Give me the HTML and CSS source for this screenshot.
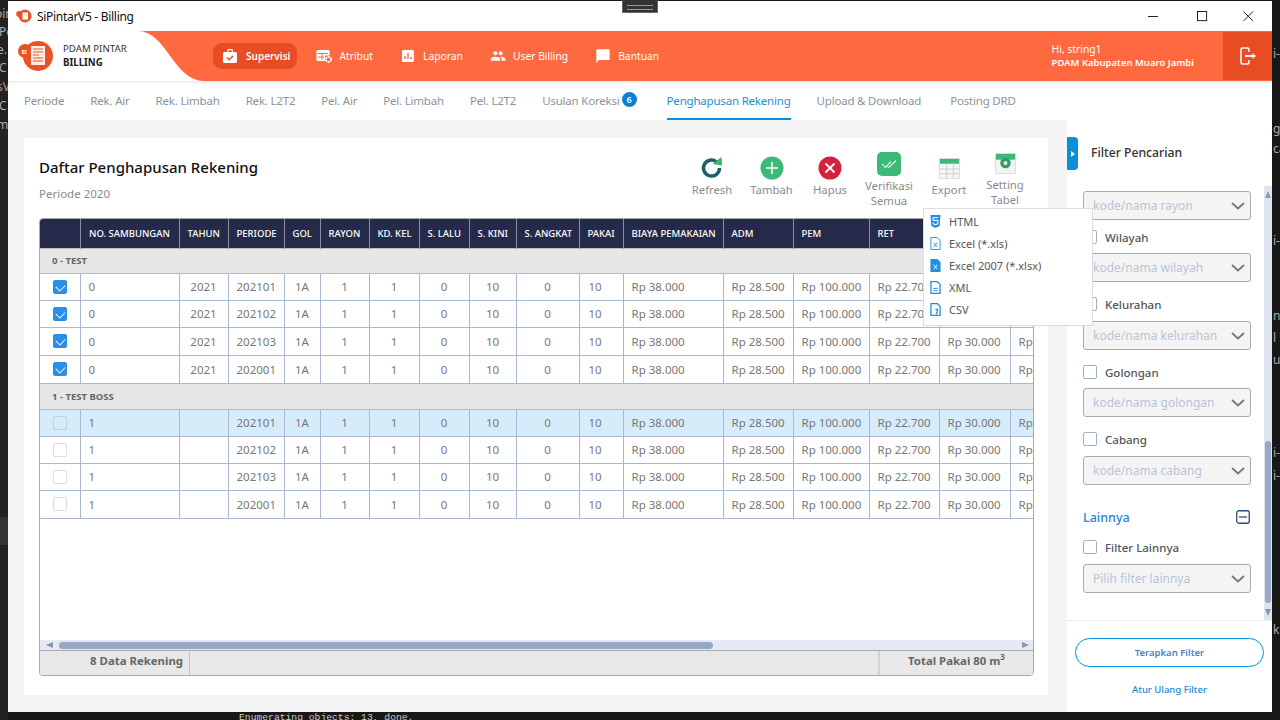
FILE: index.html
```html
<!DOCTYPE html>
<html lang="en">
<head>
  <meta charset="UTF-8" />
  <title>SiPintarV5 - Billing</title>
  <link rel="stylesheet" href="styles.css">
</head>
<body>
  <!-- terminal and editor behind the app window -->
  <div class="side-strip"></div>
  <span class="term tl1">oin</span><span class="term tl2">Pe</span><span class="term tl3">e.</span><span class="term tl4">C</span><span class="term tl5 term-gold">sV</span><span class="term tl6">C</span><span class="term tl7">mi</span>
  <span class="term tr1">i-</span><span class="term tr2">ga</span><span class="term tr3">ca</span><span class="term tr4">i-</span><span class="term tr5">n</span><span class="term tr6">l I</span><span class="term tr7">ut</span><span class="term tr8">i-</span><span class="term tr9">i-</span><span class="term tr10">k</span>
  <span class="term-line">Enumerating objects: 13, done.</span>
  <div class="drag-handle"></div>

  <div class="window">
    <div class="titlebar">
      <svg class="title-logo" viewBox="0 0 16 14"><circle cx="9" cy="7" r="6.5" fill="#ea5126"/><circle cx="3.2" cy="5" r="3" fill="#ea5126"/><rect x="6.5" y="3.5" width="5.5" height="7" fill="#fff"/></svg>
      <span class="title-text">SiPintarV5 - Billing</span>
      <div class="win-controls">
        <svg class="win-min" viewBox="0 0 12 12"><path d="M0 6h11" stroke="#111" fill="none"/></svg>
        <svg viewBox="0 0 12 12"><rect x=".5" y=".5" width="10" height="10" stroke="#111" fill="none"/></svg>
        <svg viewBox="0 0 12 12"><path d="M.5.5l10.500 10.500M11 .5L.5 11" stroke="#111" fill="none"/></svg>
      </div>
    </div>

    <header class="topbar">
      <div class="brand">
        <svg class="brand-logo" viewBox="0 0 36 30"><circle cx="20" cy="15" r="15" fill="#ea5126"/><circle cx="7" cy="10" r="7" fill="#ea5126"/><path d="M13 5h14v19H13z" fill="#fff" opacity=".9"/><path d="M15 8h10M15 11h10M15 14h6M15 17h10M15 20h10" stroke="#ea5126"/><text x="3.500" y="12.500" class="logo-mini">BI</text></svg>
        <div class="brand-text">
          <div>PDAM PINTAR</div>
          <div class="brand-sub">BILLING</div>
        </div>
      </div>
      <svg class="brand-curve" viewBox="0 0 66 50"><path d="M0 0C28 0 36 50 66 50H0z" fill="#fff"/></svg>
      <nav class="nav">
        <a class="nav-item active"><svg viewBox="0 0 16 16"><path d="M5 4V2.500C5 1.700 5.700 1 6.500 1h3c.8 0 1.500.7 1.500 1.500V4h2.500c.8 0 1.500.7 1.500 1.500v8c0 .8-.7 1.500-1.500 1.500h-11C1.700 15 1 14.300 1 13.500v-8C1 4.700 1.700 4 2.500 4zm1.300 0h3.400V2.300H6.300z" fill="#fff"/><path d="M5 9.500l2.200 2.200L11 8" stroke="#e84c22" stroke-width="1.500" fill="none"/></svg>Supervisi</a>
        <a class="nav-item"><svg viewBox="0 0 16 16"><path d="M1.500 2h11c.5 0 1 .5 1 1v4.500H9V13H1.500c-.5 0-1-.5-1-1V3c0-.5.5-1 1-1z" fill="#fff"/><path d="M2 5.500h10M2 9h6M6 5.500V12" stroke="#ff6940"/><circle cx="12.500" cy="11.500" r="2.600" fill="none" stroke="#fff" stroke-width="1.800" stroke-dasharray="2 .8"/></svg>Atribut</a>
        <a class="nav-item"><svg viewBox="0 0 16 16"><rect x="2" y="2" width="12" height="12" rx="1.500" fill="#fff"/><path d="M5 11V8M8 11V5M11 11V9" stroke="#ff6940" stroke-width="1.400"/></svg>Laporan</a>
        <a class="nav-item"><svg viewBox="0 0 24 24"><path d="M16 11c1.660 0 2.990-1.340 2.990-3S17.660 5 16 5c-1.660 0-3 1.340-3 3s1.340 3 3 3zm-8 0c1.660 0 2.990-1.340 2.990-3S9.660 5 8 5C6.340 5 5 6.340 5 8s1.340 3 3 3zm0 2c-2.330 0-7 1.170-7 3.500V19h14v-2.500c0-2.330-4.670-3.500-7-3.500zm8 0c-.29 0-.62.02-.97.05 1.160.84 1.970 1.970 1.970 3.450V19h6v-2.500c0-2.330-4.670-3.500-7-3.500z" fill="#fff"/></svg>User Billing</a>
        <a class="nav-item"><svg viewBox="0 0 24 24"><path d="M20 2H4c-1.100 0-2 .9-2 2v18l4-4h14c1.100 0 2-.9 2-2V4c0-1.100-.9-2-2-2z" fill="#fff"/></svg>Bantuan</a>
      </nav>
      <div class="user-box">
        <div>Hi, string1</div>
        <div class="user-org">PDAM Kabupaten Muaro Jambi</div>
      </div>
      <button class="logout"><svg viewBox="0 0 18 18"><path d="M10 5V2.500C10 1.700 9.500 1 8.500 1h-5C2.500 1 2 1.700 2 2.500v13c0 .8.5 1.500 1.500 1.500h5c1 0 1.500-.7 1.500-1.500V13" fill="none" stroke="#fff" stroke-width="1.500"/><path d="M6 9h9" stroke="#fff" stroke-width="2"/><path d="M13.500 6l3.500 3-3.500 3z" fill="#fff"/></svg></button>
    </header>

    <div class="tabs">
      <a class="tab">Periode</a>
      <a class="tab">Rek. Air</a>
      <a class="tab">Rek. Limbah</a>
      <a class="tab">Rek. L2T2</a>
      <a class="tab">Pel. Air</a>
      <a class="tab">Pel. Limbah</a>
      <a class="tab">Pel. L2T2</a>
      <a class="tab">Usulan Koreksi <span class="badge">6</span></a>
      <a class="tab active">Penghapusan Rekening</a>
      <a class="tab">Upload &amp; Download</a>
      <a class="tab">Posting DRD</a>
    </div>

    <div class="content">
      <main class="main">
        <section class="card">
          <div class="card-head">
            <div>
              <h1>Daftar Penghapusan Rekening</h1>
              <p class="period">Periode 2020</p>
            </div>
            <div class="toolbar">
              <div class="tool tool-refresh">
                <svg viewBox="0 0 24 24"><path d="M19.500 12a8 8 0 1 1-3-6.200" fill="none" stroke="#1f5f6b" stroke-width="3.500"/><path d="M12.500 8L22 9.500 21.500 1z" fill="#35b56a"/></svg>
                <span>Refresh</span>
              </div>
              <div class="tool tool-add">
                <svg viewBox="0 0 24 24"><circle cx="12" cy="12" r="11.500" fill="#3cb878"/><path d="M12 6v12M6 12h12" stroke="#fff" stroke-width="1.500"/></svg>
                <span>Tambah</span>
              </div>
              <div class="tool tool-del">
                <svg viewBox="0 0 24 24"><circle cx="12" cy="12" r="11.500" fill="#d4213d"/><path d="M7.500 7.500l9 9M16.500 7.500l-9 9" stroke="#fff" stroke-width="1.800"/></svg>
                <span>Hapus</span>
              </div>
              <div class="tool tool-verify">
                <svg viewBox="0 0 24 24"><rect width="24" height="24" rx="5" fill="#3cb878"/><path d="M5 12l3.500 3.500L14 9.500M10.500 14.500l1.500 1L19 8.500" fill="none" stroke="#d8f2e2" stroke-width="1.200"/></svg>
                <span>Verifikasi<br>Semua</span>
              </div>
              <div class="tool tool-export">
                <svg viewBox="0 0 22 22"><rect x=".5" y=".5" width="21" height="21" fill="#f6f6f6" stroke="#ddd"/><rect x="1" y="1" width="20" height="5" fill="#3cb878"/><path d="M1 11.500h20M1 16.500h20M8 6v15M15 6v15" stroke="#ccc"/></svg>
                <span>Export</span>
              </div>
              <div class="tool tool-setting">
                <svg viewBox="0 0 22 22"><rect x=".5" y=".5" width="21" height="21" fill="#f3f3f3" stroke="#ddd"/><rect x="1" y="1" width="20" height="6" fill="#3cb878"/><circle cx="11" cy="10.500" r="5.500" fill="#2f9e63"/><circle cx="11" cy="10.500" r="2" fill="#f3f3f3"/></svg>
                <span>Setting<br>Tabel</span>
              </div>
            </div>
          </div>

          <div class="grid-box">
            <div class="grid-scroll">
              <table class="grid">
                <colgroup>
                  <col class="c40"><col class="c99"><col class="c49"><col class="c56"><col class="c36"><col class="c49"><col class="c50"><col class="c50"><col class="c47"><col class="c63"><col class="c44"><col class="c100"><col class="c70"><col class="c76"><col class="c70"><col class="c71"><col class="c100">
                </colgroup>
                <thead>
                  <tr><th></th><th>NO. SAMBUNGAN</th><th>TAHUN</th><th>PERIODE</th><th>GOL</th><th>RAYON</th><th>KD. KEL</th><th>S. LALU</th><th>S. KINI</th><th>S. ANGKAT</th><th>PAKAI</th><th>BIAYA PEMAKAIAN</th><th>ADM</th><th>PEM</th><th>RET</th><th>LAIN</th><th>TOTAL</th></tr>
                </thead>
                <tbody>
                  <tr class="group"><td colspan="17">0 - TEST</td></tr>
                  <tr><td><span class="check on"></span></td><td>0</td><td>2021</td><td>202101</td><td>1A</td><td>1</td><td>1</td><td>0</td><td>10</td><td>0</td><td>10</td><td>Rp 38.000</td><td>Rp 28.500</td><td>Rp 100.000</td><td>Rp 22.700</td><td>Rp 30.000</td><td>Rp 219.200</td></tr>
                  <tr><td><span class="check on"></span></td><td>0</td><td>2021</td><td>202102</td><td>1A</td><td>1</td><td>1</td><td>0</td><td>10</td><td>0</td><td>10</td><td>Rp 38.000</td><td>Rp 28.500</td><td>Rp 100.000</td><td>Rp 22.700</td><td>Rp 30.000</td><td>Rp 219.200</td></tr>
                  <tr class="tall"><td><span class="check on"></span></td><td>0</td><td>2021</td><td>202103</td><td>1A</td><td>1</td><td>1</td><td>0</td><td>10</td><td>0</td><td>10</td><td>Rp 38.000</td><td>Rp 28.500</td><td>Rp 100.000</td><td>Rp 22.700</td><td>Rp 30.000</td><td>Rp 219.200</td></tr>
                  <tr class="tall"><td><span class="check on"></span></td><td>0</td><td>2021</td><td>202001</td><td>1A</td><td>1</td><td>1</td><td>0</td><td>10</td><td>0</td><td>10</td><td>Rp 38.000</td><td>Rp 28.500</td><td>Rp 100.000</td><td>Rp 22.700</td><td>Rp 30.000</td><td>Rp 219.200</td></tr>
                  <tr class="group tall"><td colspan="17">1 - TEST BOSS</td></tr>
                  <tr class="selected"><td><span class="check"></span></td><td>1</td><td></td><td>202101</td><td>1A</td><td>1</td><td>1</td><td>0</td><td>10</td><td>0</td><td>10</td><td>Rp 38.000</td><td>Rp 28.500</td><td>Rp 100.000</td><td>Rp 22.700</td><td>Rp 30.000</td><td>Rp 219.200</td></tr>
                  <tr><td><span class="check"></span></td><td>1</td><td></td><td>202102</td><td>1A</td><td>1</td><td>1</td><td>0</td><td>10</td><td>0</td><td>10</td><td>Rp 38.000</td><td>Rp 28.500</td><td>Rp 100.000</td><td>Rp 22.700</td><td>Rp 30.000</td><td>Rp 219.200</td></tr>
                  <tr><td><span class="check"></span></td><td>1</td><td></td><td>202103</td><td>1A</td><td>1</td><td>1</td><td>0</td><td>10</td><td>0</td><td>10</td><td>Rp 38.000</td><td>Rp 28.500</td><td>Rp 100.000</td><td>Rp 22.700</td><td>Rp 30.000</td><td>Rp 219.200</td></tr>
                  <tr class="tall"><td><span class="check"></span></td><td>1</td><td></td><td>202001</td><td>1A</td><td>1</td><td>1</td><td>0</td><td>10</td><td>0</td><td>10</td><td>Rp 38.000</td><td>Rp 28.500</td><td>Rp 100.000</td><td>Rp 22.700</td><td>Rp 30.000</td><td>Rp 219.200</td></tr>
                </tbody>
              </table>
            </div>
            <div class="hscroll">
              <span class="arrow-left"></span>
              <div class="hthumb"></div>
              <span class="arrow-right"></span>
            </div>
            <div class="grid-foot">
              <div class="foot-count">8 Data Rekening</div>
              <div class="foot-mid"></div>
              <div class="foot-total">Total Pakai 80 m<sup>3</sup></div>
            </div>
          </div>
        </section>
      </main>

      <aside class="filter">
        <div class="filter-toggle"><span class="toggle-arrow"></span></div>
        <h2>Filter Pencarian</h2>
        <div class="filter-body">
          <div class="filter-fields">
            <div class="select">kode/nama rayon<svg viewBox="0 0 14 8"><path d="M1 1l6 5.500L13 1" fill="none" stroke="#777" stroke-width="1.800"/></svg></div>
            <label class="check-row first"><span class="box"></span>Wilayah</label>
            <div class="select">kode/nama wilayah<svg viewBox="0 0 14 8"><path d="M1 1l6 5.500L13 1" fill="none" stroke="#777" stroke-width="1.800"/></svg></div>
            <label class="check-row"><span class="box"></span>Kelurahan</label>
            <div class="select">kode/nama kelurahan<svg viewBox="0 0 14 8"><path d="M1 1l6 5.500L13 1" fill="none" stroke="#777" stroke-width="1.800"/></svg></div>
            <label class="check-row short"><span class="box"></span>Golongan</label>
            <div class="select">kode/nama golongan<svg viewBox="0 0 14 8"><path d="M1 1l6 5.500L13 1" fill="none" stroke="#777" stroke-width="1.800"/></svg></div>
            <label class="check-row"><span class="box"></span>Cabang</label>
            <div class="select">kode/nama cabang<svg viewBox="0 0 14 8"><path d="M1 1l6 5.500L13 1" fill="none" stroke="#777" stroke-width="1.800"/></svg></div>
            <div class="section-head"><span>Lainnya</span><svg viewBox="0 0 14 14"><rect x=".75" y=".75" width="12.500" height="12.500" rx="2" fill="none" stroke="#2d4a7c" stroke-width="1.300"/><path d="M3 7h8" stroke="#2d4a7c" stroke-width="1.300"/></svg></div>
            <label class="check-row tight"><span class="box"></span>Filter Lainnya</label>
            <div class="select">Pilih filter lainnya<svg viewBox="0 0 14 8"><path d="M1 1l6 5.500L13 1" fill="none" stroke="#777" stroke-width="1.800"/></svg></div>
          </div>
          <div class="vscroll">
            <span class="arrow-up"></span>
            <div class="vspace"></div>
            <div class="vthumb"></div>
            <span class="arrow-down"></span>
          </div>
        </div>
        <div class="filter-foot">
          <button class="btn-apply">Terapkan Filter</button>
          <a class="btn-reset">Atur Ulang Filter</a>
        </div>
      </aside>
    </div>

    <div class="export-menu">
      <div class="export-item"><svg viewBox="0 0 12 14"><path d="M.5 0h11l-1 12L6 14l-4.500-2z" fill="#1e90df"/><path d="M9 3H3.300l.2 3h5.200l-.3 3.500L6 10.500l-2.300-1-.1-1.500" fill="none" stroke="#fff" stroke-width="1.100"/></svg>HTML</div>
      <div class="export-item"><svg viewBox="0 0 12 14"><path d="M1 .5h7l3 3v10H1z" fill="#fff" stroke="#1e90df"/><path d="M4 6l4 5M8 6l-4 5" stroke="#1e90df"/></svg>Excel (*.xls)</div>
      <div class="export-item"><svg viewBox="0 0 12 14"><path d="M.5 0H8l3.500 3.500V14H.5z" fill="#1e90df"/><path d="M4 6l4 5M8 6l-4 5" stroke="#fff"/></svg>Excel 2007 (*.xlsx)</div>
      <div class="export-item"><svg viewBox="0 0 12 14"><path d="M1 .5h7l3 3v10H1z" fill="#fff" stroke="#1e90df" stroke-width="1.400"/><path d="M3.500 8h5M3.500 10.500h5" stroke="#1e90df"/></svg>XML</div>
      <div class="export-item"><svg viewBox="0 0 12 14"><path d="M1 .5h7l3 3v10H1z" fill="#fff" stroke="#1e90df" stroke-width="1.400"/><path d="M6 7h2v3l-1.500 2" fill="none" stroke="#1e90df" stroke-width="1.400"/></svg>CSV</div>
    </div>
  </div>
</body>
</html>
```

FILE: styles.css
```css
* {
  margin: 0;
  padding: 0;
  box-sizing: border-box;
}

body {
  position: relative;
  width: 1280px;
  height: 720px;
  overflow: hidden;
  background: #181818;
  font-family: "Noto Sans", "Open Sans", sans-serif;
  font-size: 12px;
  color: #777;
}

/* desktop behind the window */
.side-strip {
  position: absolute;
  left: 0;
  top: 0;
  width: 8px;
  height: 720px;
  background: #222;
}

.side-strip::after {
  content: "";
  position: absolute;
  left: 0;
  top: 517px;
  width: 8px;
  height: 28px;
  background: #333;
}

.term {
  position: absolute;
  font-size: 12px;
  line-height: 14px;
  color: #aaa;
  white-space: nowrap;
}

.term-gold { color: #b59a6a; }

.tl1 { left: -5px; top: 7px; }
.tl2 { left: -1px; top: 25px; }
.tl3 { left: -3px; top: 43px; }
.tl4 { left: -1px; top: 61px; }
.tl5 { left: -3px; top: 80px; }
.tl6 { left: -1px; top: 99px; }
.tl7 { left: -3px; top: 118px; }

.tr1 { left: 1273px; top: 47px; }
.tr2 { left: 1273px; top: 122px; }
.tr3 { left: 1273px; top: 142px; }
.tr4 { left: 1273px; top: 234px; }
.tr5 { left: 1273px; top: 309px; }
.tr6 { left: 1273px; top: 331px; }
.tr7 { left: 1273px; top: 353px; }
.tr8 { left: 1273px; top: 446px; }
.tr9 { left: 1273px; top: 469px; }
.tr10 { left: 1273px; top: 623px; }

.term-line {
  position: absolute;
  left: 239px;
  top: 712px;
  font-family: "Liberation Mono", monospace;
  font-size: 9.700px;
  line-height: 12px;
  color: #ccc;
}

.drag-handle {
  position: absolute;
  left: 622px;
  top: 0;
  width: 36px;
  height: 13px;
  background: #333;
  border: 1px solid #666;
  border-top: 0;
  z-index: 5;
}

.drag-handle::after {
  content: "";
  position: absolute;
  left: 4px;
  right: 4px;
  top: 5px;
  height: 3px;
  border-top: 1px solid #999;
  border-bottom: 1px solid #999;
}

.window {
  position: relative;
  display: flex;
  flex-direction: column;
  width: 1264px;
  height: 711px;
  margin: 1px 0 0 8px;
  background: #f4f4f4;
}

/* title bar */
.titlebar {
  display: flex;
  align-items: center;
  height: 30px;
  background: #fff;
  padding-left: 8px;
}

.title-logo {
  width: 16px;
  height: 14px;
}

.title-text {
  margin-left: 5px;
  font-size: 12px;
  letter-spacing: -0.3px;
  color: #111;
}

.win-controls {
  display: flex;
  gap: 32px;
  margin-left: auto;
  margin-right: 15px;
}

.win-controls svg {
  width: 11px;
  height: 11px;
  margin-right: 3px;
}

.win-controls .win-min { margin-right: 6px; }

/* orange header */
.topbar {
  position: relative;
  display: flex;
  align-items: center;
  height: 50px;
  background: #ff6940;
  color: #fff;
  box-shadow: 0 1px 3px rgba(0, 0, 0, 0.12);
}

.brand {
  display: flex;
  align-items: center;
  width: 130px;
  height: 50px;
  padding-left: 10px;
  background: #fff;
}

.brand-logo {
  width: 36px;
  height: 30px;
}

.logo-mini {
  font-size: 5px;
  font-weight: 700;
  fill: #fff;
}

.brand-text {
  margin-left: 9px;
  font-size: 9.700px;
  line-height: 14px;
  color: #333;
}

.brand-sub {
  font-weight: 700;
  color: #222;
}

.brand-curve {
  width: 66px;
  height: 50px;
  flex-shrink: 0;
}

.nav {
  display: flex;
  gap: 10px;
  margin-left: 9px;
}

.nav-item {
  display: flex;
  align-items: center;
  gap: 7px;
  height: 26px;
  padding: 0 8px 0 9px;
  border-radius: 9px;
  font-size: 10.300px;
  color: #fff;
}

.nav-item svg {
  width: 16px;
  height: 16px;
}

.nav-item.active {
  gap: 8px;
  padding-right: 7px;
  background: #e84c22;
  font-size: 10px;
  font-weight: 600;
}

.user-box {
  margin-left: auto;
  margin-right: 29px;
  font-size: 10.300px;
  line-height: 14px;
}

.user-org {
  font-size: 9.500px;
  font-weight: 600;
}

.logout {
  display: flex;
  align-items: center;
  justify-content: center;
  width: 49px;
  height: 48px;
  border: 0;
  background: #e84c22;
}

.logout svg {
  width: 18px;
  height: 18px;
}

/* tabs */
.tabs {
  display: flex;
  gap: 26px;
  height: 39px;
  padding-left: 16px;
  background: #fff;
}

.tab {
  display: flex;
  align-items: center;
  gap: 2px;
  height: 39px;
  font-size: 11.500px;
  letter-spacing: -0.2px;
  color: #8d929b;
  border-bottom: 2px solid transparent;
  padding-top: 2px;
}

.tab:last-child { margin-left: 3px; }

.tab.active {
  color: #1a8fd8;
  border-bottom-color: #0b8fdb;
}

.badge {
  display: inline-flex;
  align-items: center;
  justify-content: center;
  width: 15px;
  height: 15px;
  margin: -3px 4px 0 0;
  border-radius: 50%;
  background: #0b7fd0;
  color: #fff;
  font-size: 9px;
  font-weight: 600;
  letter-spacing: 0;
}

/* main area */
.content {
  display: flex;
  flex: 1;
  min-height: 0;
}

.main {
  width: 1059px;
  padding: 18px 0 17px 16px;
}

.card {
  display: flex;
  flex-direction: column;
  width: 1024px;
  height: 557px;
  padding: 0 14px 19px 15px;
  background: #fff;
}

.card-head {
  display: flex;
  justify-content: space-between;
  height: 80px;
}

h1 {
  margin-top: 17px;
  font-size: 15px;
  line-height: 24px;
  font-weight: 500;
  color: #111;
}

.period {
  margin-top: 7px;
  font-size: 11.500px;
  line-height: 16px;
  color: #8b8b8b;
}

.toolbar {
  display: flex;
  padding-top: 13px;
  padding-right: 3px;
}

.tool {
  display: flex;
  flex-direction: column;
  align-items: center;
  width: 60px;
  font-size: 11.300px;
  line-height: 15px;
  color: #8b8b8b;
  text-align: center;
}

.tool svg {
  width: 24px;
  height: 24px;
  margin-top: 5px;
  margin-bottom: 2px;
}

.tool-verify svg {
  margin-top: 1px;
  margin-bottom: 2px;
}

.tool-export svg {
  width: 21px;
  height: 21px;
  margin-top: 7px;
  margin-bottom: 3px;
}

.tool-setting svg {
  width: 21px;
  height: 21px;
  margin-top: 2px;
  margin-bottom: 3px;
}

.tool-add { width: 59px; }
.tool-del { width: 58px; }
.tool-setting { width: 52px; }

.grid-box {
  display: flex;
  flex-direction: column;
  flex: 1;
  min-height: 0;
  border: 1px solid #aaa;
  border-radius: 4px;
  overflow: hidden;
}

.grid-scroll {
  flex: 1;
  min-height: 0;
  overflow: hidden;
}

.grid {
  width: 1010px;
  border-collapse: collapse;
  table-layout: fixed;
}

.c40 { width: 40px; }
.c99 { width: 99px; }
.c49 { width: 49px; }
.c56 { width: 56px; }
.c36 { width: 36px; }
.c50 { width: 50px; }
.c47 { width: 47px; }
.c63 { width: 63px; }
.c44 { width: 44px; }
.c100 { width: 100px; }
.c70 { width: 70px; }
.c76 { width: 76px; }
.c71 { width: 71px; }

th {
  height: 29px;
  padding: 0 8px;
  background: #252a4a;
  border-left: 1px solid #8a8d9c;
  color: #fff;
  font-size: 9.500px;
  font-weight: 500;
  text-align: center;
  white-space: nowrap;
}

th:first-child { border-left: 0; }

th:nth-child(n+12) { text-align: left; }

td {
  height: 27px;
  padding: 0 8px;
  border: 1px solid #a9b8cf;
  font-size: 11.500px;
  text-align: center;
  white-space: nowrap;
  overflow: hidden;
  background: #fff;
}

tbody tr td:first-child { border-left: 0; }

.tall td { height: 28px; }

td:nth-child(2),
td:nth-child(n+12) {
  text-align: left;
}

td:nth-child(11) {
  padding-left: 9px;
  text-align: left;
}

.group td {
  height: 25px;
  padding: 0 12px;
  background: #e6e6e6;
  border-color: #bbb;
  font-size: 9.500px;
  font-weight: 700;
  color: #666;
  text-align: left;
}

.group.tall td { height: 26px; }

.selected td { background: #d6ecfb; }

.check {
  display: block;
  width: 14px;
  height: 14px;
  margin: 0 auto;
  background: #fff;
  border: 1px solid #ddd;
  border-radius: 2px;
}

.selected .check { background: #d6ecfb; border-color: #c4d2db; }

.check.on {
  position: relative;
  background: #2a8fe8;
  border-color: #2a8fe8;
}

.check.on::after {
  content: "";
  position: absolute;
  left: 3px;
  top: 1px;
  width: 6px;
  height: 8px;
  border: solid #fff;
  border-width: 0 1.500px 1.500px 0;
  transform: rotate(45deg) scale(.9);
}

.hscroll {
  display: flex;
  align-items: center;
  height: 10px;
  padding: 0 4px 0 6px;
  background: #e4e9f3;
}

.arrow-left,
.arrow-right {
  width: 0;
  height: 0;
  border-top: 3.500px solid transparent;
  border-bottom: 3.500px solid transparent;
}

.arrow-left { border-right: 7px solid #8c96a6; }
.arrow-right { border-left: 7px solid #8c96a6; margin-left: auto; }

.hthumb {
  width: 654px;
  height: 7px;
  margin-left: 6px;
  border-radius: 4px;
  background: #96a8c4;
}

.grid-foot {
  display: flex;
  height: 25px;
  background: #e8e8e8;
  border-top: 1px solid #aaa;
  font-size: 11.400px;
  font-weight: 700;
  color: #666;
}

.foot-count {
  width: 150px;
  padding-right: 6px;
  border-right: 1px solid #c4c4c4;
  text-align: right;
  line-height: 20px;
}

.foot-mid { flex: 1; }

.foot-total {
  width: 155px;
  border-left: 2px solid #d2d2d2;
  text-align: center;
  line-height: 20px;
}

.foot-total sup {
  font-size: 8px;
  line-height: 0;
}

/* filter panel */
.filter {
  position: relative;
  display: flex;
  flex-direction: column;
  width: 205px;
  background: #fff;
}

.filter h2 {
  height: 66px;
  padding: 24px 0 0 24px;
  font-size: 12.200px;
  line-height: 18px;
  font-weight: 500;
  color: #333;
}

.filter-toggle {
  position: absolute;
  left: 0;
  top: 17px;
  display: flex;
  align-items: center;
  justify-content: center;
  width: 11px;
  height: 33px;
  background: #0b8fdb;
  border-radius: 0 4px 4px 0;
}

.toggle-arrow {
  border-top: 3px solid transparent;
  border-bottom: 3px solid transparent;
  border-left: 4px solid #fff;
}

.filter-body {
  display: flex;
  height: 434px;
  overflow: hidden;
}

.filter-fields {
  width: 197px;
  padding: 5px 0 0 16px;
}

.select {
  display: flex;
  align-items: center;
  justify-content: space-between;
  width: 168px;
  height: 29px;
  padding: 0 5px 0 9px;
  background: #f4f4f4;
  border: 1px solid #aaa;
  border-radius: 3px;
  font-size: 12px;
  color: #b9c4d6;
  white-space: nowrap;
}

.select svg {
  width: 14px;
  height: 8px;
  flex-shrink: 0;
}

.check-row {
  display: flex;
  align-items: center;
  gap: 8px;
  height: 22px;
  margin: 12px 0 5px;
  padding-bottom: 2px;
  font-size: 11.500px;
  font-weight: 500;
  color: #555;
}

.check-row.first { margin-top: 7px; margin-bottom: 4px; }
.check-row.short { margin-bottom: 4px; }
.check-row.tight { margin-top: 9px; }

.box {
  width: 14px;
  height: 14px;
  background: #fff;
  border: 1px solid #9fb0c8;
  border-radius: 2px;
}

.section-head {
  display: flex;
  align-items: center;
  justify-content: space-between;
  width: 167px;
  height: 20px;
  margin-top: 23px;
  padding-bottom: 2px;
  font-size: 12.500px;
  font-weight: 500;
  color: #1e88d4;
}

.section-head svg {
  width: 14px;
  height: 14px;
}

.vscroll {
  display: flex;
  flex-direction: column;
  align-items: center;
  width: 8px;
  background: #dfe5f0;
}

.vspace { flex: 1; }

.vthumb {
  width: 6px;
  height: 162px;
  border-radius: 3px;
  background: #96a8c4;
}

.arrow-up,
.arrow-down {
  width: 0;
  height: 0;
  border-left: 3.500px solid transparent;
  border-right: 3.500px solid transparent;
}

.arrow-up { margin-top: 5px; border-bottom: 7px solid #8c96a6; }
.arrow-down { margin-top: 6px; margin-bottom: 4px; border-top: 7px solid #8c96a6; }

.filter-foot {
  display: flex;
  flex-direction: column;
  align-items: center;
  flex: 1;
  padding-top: 17px;
  border-top: 1px solid #eee;
}

.btn-apply {
  width: 189px;
  height: 29px;
  background: #fff;
  border: 1px solid #0b8fdb;
  border-radius: 15px;
  font-family: inherit;
  font-size: 9.500px;
  font-weight: 600;
  color: #4a7fc1;
}

.btn-reset {
  margin-top: 16px;
  font-size: 9.500px;
  font-weight: 500;
  color: #1e88d4;
}

/* export dropdown */
.export-menu {
  position: absolute;
  left: 915px;
  top: 207px;
  width: 170px;
  padding: 1px 0 5px;
  background: #fff;
  border: 1px solid #ddd;
  z-index: 3;
}

.export-item {
  display: flex;
  align-items: center;
  gap: 8px;
  height: 22px;
  padding-left: 6px;
  font-size: 11px;
  color: #555;
}

.export-item svg {
  width: 11px;
  height: 13px;
  flex-shrink: 0;
}
```
